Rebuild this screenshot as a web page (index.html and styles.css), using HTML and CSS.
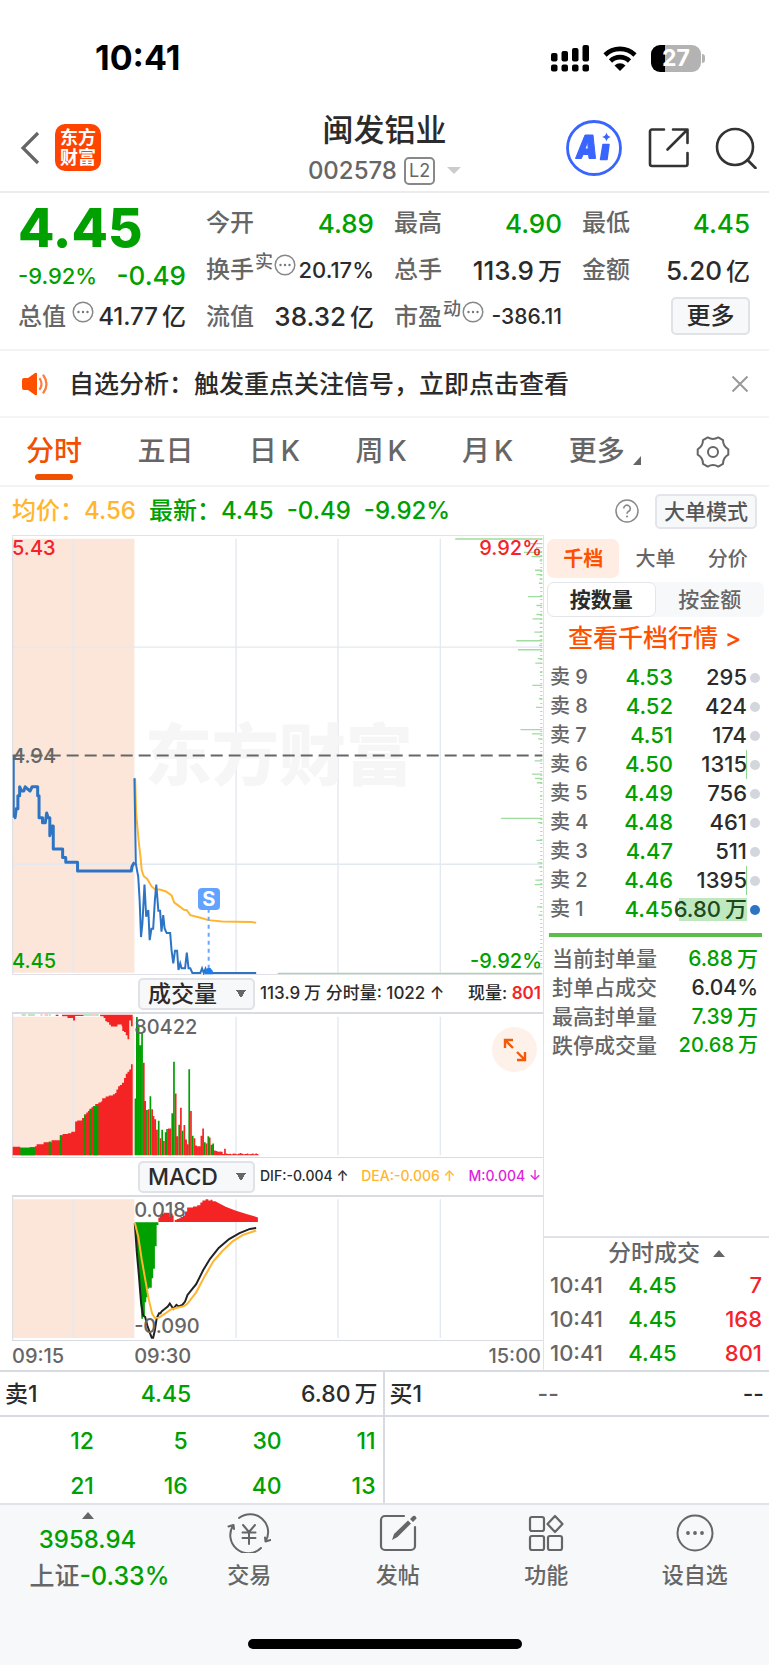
FILE: index.html
```html
<!DOCTYPE html>
<html lang="zh-CN">
<head>
<meta charset="utf-8">
<meta name="viewport" content="width=device-width, initial-scale=1">
<title>闽发铝业 002578</title>
<link rel="stylesheet" href="styles.css">
</head>
<body>
<div class="statusbar">
  <time class="clock">10:41</time>
  <div class="status-icons">
    <svg width="38" height="27" viewBox="0 0 38 27"><g fill="#000"><rect x="0" y="8" width="6.500" height="8.500" rx="2"/><rect x="10.500" y="6" width="6.500" height="10.500" rx="2"/><rect x="21" y="3" width="6.500" height="13.500" rx="2"/><rect x="31.500" y="0" width="6.500" height="16.500" rx="2"/><rect x="0" y="19.500" width="6.500" height="7" rx="2"/><rect x="10.500" y="19.500" width="6.500" height="7" rx="2"/><rect x="21" y="19.500" width="6.500" height="7" rx="2"/><rect x="31.500" y="19.500" width="6.500" height="7" rx="2"/></g></svg>
    <svg width="34" height="26" viewBox="0 0 34 26"><g fill="none" stroke="#000" stroke-width="4.600"><path d="M2 10a21.500 21.500 0 0 1 30 0"/><path d="M7.500 16a13.500 13.500 0 0 1 19 0"/></g><path d="M11.500 20.500a8 8 0 0 1 11 0L17 26z"/></svg>
    <div class="battery"><span>27</span></div>
  </div>
</div>

<header class="header">
  <div class="head-left">
    <button class="icon-btn" aria-label="返回"><svg width="22" height="34" viewBox="0 0 22 34"><path d="M19 2 4 17l15 15" fill="none" stroke="#666" stroke-width="3.200"/></svg></button>
    <div class="logo"><span>东方</span><span>财富</span></div>
  </div>
  <div class="title">
    <h1>闽发铝业</h1>
    <div class="code"><span>002578</span><span class="l2">L2</span><i class="tri-down"></i></div>
  </div>
  <div class="head-right">
    <button class="icon-btn" aria-label="Ai"><svg width="58" height="58" viewBox="0 0 58 58"><circle cx="29" cy="29" r="26.500" fill="none" stroke="#3964fe" stroke-width="2.800"/><path d="M20 16h8l2.500 23.500h-6.500l-.4-4h-5.500l-1.700 4H10.500zM20 30h3.200l-.5-7.500z" fill="#3964fe" fill-rule="evenodd" stroke="#3964fe" stroke-linejoin="round"/><path d="M38 25.500h6l-2 15h-6.500z" fill="#3964fe" stroke="#3964fe" stroke-width="1.500" stroke-linejoin="round"/><path d="M41.500 13.500c.9 3 1.500 3.600 4.500 4.500-3 .9-3.600 1.500-4.500 4.500-.9-3-1.500-3.600-4.500-4.500 3-.9 3.600-1.500 4.500-4.500z" fill="#3964fe"/></svg></button>
    <button class="icon-btn" aria-label="分享"><svg width="42" height="42" viewBox="0 0 42 42"><g fill="none" stroke="#333" stroke-width="2.600" stroke-linecap="round" stroke-linejoin="round"><path d="M16 2.500H4a2 2 0 0 0-2 2V37a2 2 0 0 0 2 2h33.500a2 2 0 0 0 2-2V26"/><path d="M25 2.500h14.500V16M39 3 19.500 22.500"/></g></svg></button>
    <button class="icon-btn" aria-label="搜索"><svg width="42" height="42" viewBox="0 0 42 42"><g fill="none" stroke="#333" stroke-width="2.600" stroke-linecap="round"><circle cx="20" cy="20" r="18"/><path d="m32.500 33 8 8"/></g></svg></button>
  </div>
</header>

<section class="quote">
  <div class="qcol main">
    <strong class="price">4.45</strong>
    <div class="qrow up2"><span class="g s22">-9.92%</span><span class="g">-0.49</span></div>
    <div class="qrow"><span class="lab">总值<svg class="dots gap" viewBox="0 0 22 22"><use href="#dots"/></svg></span><span class="val s24">41.77<small>亿</small></span></div>
  </div>
  <div class="qcol">
    <div class="qrow"><span class="lab">今开</span><span class="val g">4.89</span></div>
    <div class="qrow"><span class="lab">换手<sup>实</sup><svg class="dots" viewBox="0 0 22 22"><use href="#dots"/></svg></span><span class="val s22">20.17%</span></div>
    <div class="qrow"><span class="lab">流值</span><span class="val">38.32<small>亿</small></span></div>
  </div>
  <div class="qcol">
    <div class="qrow"><span class="lab">最高</span><span class="val g">4.90</span></div>
    <div class="qrow"><span class="lab">总手</span><span class="val">113.9<small>万</small></span></div>
    <div class="qrow"><span class="lab">市盈<sup>动</sup><svg class="dots" viewBox="0 0 22 22"><use href="#dots"/></svg></span><span class="val s21">-386.11</span></div>
  </div>
  <div class="qcol">
    <div class="qrow"><span class="lab">最低</span><span class="val g">4.45</span></div>
    <div class="qrow"><span class="lab">金额</span><span class="val">5.20<small>亿</small></span></div>
    <div class="qrow end"><button class="more">更多</button></div>
  </div>
</section>

<section class="notice">
  <svg width="28" height="24" viewBox="0 0 28 24"><path d="M1 8a2 2 0 0 1 2-2h4l7-5q2-1 2 1v20q0 2-2 1l-7-5H3a2 2 0 0 1-2-2z" fill="#ff5000"/><path d="M19 7q3 5 0 10M22.500 3.500q6 8.500 0 17" fill="none" stroke="#ff7a3d" stroke-width="2.200" stroke-linecap="round"/></svg>
  <p>自选分析：触发重点关注信号，立即点击查看</p>
  <button class="icon-btn" aria-label="关闭"><svg width="18" height="18" viewBox="0 0 18 18"><path d="m1.500 1.500 15 15m0-15-15 15" stroke="#999" stroke-width="2"/></svg></button>
</section>

<nav class="tabs">
  <button class="tab on">分时</button>
  <button class="tab">五日</button>
  <button class="tab">日<small>K</small></button>
  <button class="tab">周<small>K</small></button>
  <button class="tab">月<small>K</small></button>
  <button class="tab">更多<svg class="corner" width="8" height="9" viewBox="0 0 8 9"><path d="M8 0v9H0z" fill="#666"/></svg></button>
  <button class="tab" aria-label="设置"><svg width="34" height="34" viewBox="0 0 34 34"><g fill="none" stroke="#666" stroke-width="2" stroke-linejoin="round"><path d="M32.300 14.300V19.700Q27 22.800 27 28.900L22.300 31.600Q17 28.500 11.700 31.600L7 28.900Q7 22.800 1.700 19.700V14.300Q7 11.200 7 5.100L11.700 2.400Q17 5.500 22.300 2.400L27 5.100Q27 11.200 32.300 14.300z"/><circle cx="17" cy="17" r="5"/></g></svg></button>
</nav>

<section class="info">
  <span class="y">均价：4.56</span>
  <span class="g">最新：4.45</span><span class="g">-0.49</span><span class="g">-9.92%</span>
  <div class="info-right">
    <svg width="24" height="24" viewBox="0 0 24 24"><circle cx="12" cy="12" r="11" fill="none" stroke="#888" stroke-width="1.500"/><path d="M8.700 9.500a3.300 3.300 0 1 1 5 2.800q-1.700 1-1.700 2.500" fill="none" stroke="#888" stroke-width="1.600"/><circle cx="12" cy="17.500" r="1.100" fill="#888"/></svg>
    <button class="mode">大单模式</button>
  </div>
</section>

<main class="board">
  <div class="charts">
    <div class="plot price-plot">
      <svg class="canvas" viewBox="34 15 1531 1320" preserveAspectRatio="none">
        <path class="pre" d="M36 23H387V1328H36z"/>
        <path class="grid" d="M210 23V1328M680 23V1328M974 23V1328M1269 23V1328M36 349H1563M36 1002H1563"/>
      </svg>
      <span class="watermark">东方财富</span>
      <svg class="canvas" viewBox="34 15 1531 1320" preserveAspectRatio="none">
        <path class="frame" d="M36 16V1334M36 1334H1563"/>
        <path class="ticks" d="M1312 24H1563M1525 38H1563M1545 50H1563M1510 64H1563M1532 77H1563M1555 90H1563M1542 118H1563M1546 131H1563M1555 144H1563M1553 157H1563M1557 170H1563M1522 197H1563M1546 224H1563M1546 251H1563M1535 264H1563M1555 277H1563M1556 290H1563M1540 304H1563M1555 317H1563M1488 330H1563M1553 344H1563M1493 357H1563M1550 384H1563M1543 397H1563M1556 425H1563M1534 464H1563M1553 504H1563M1545 530H1563M1500 597H1563M1533 610H1563M1551 625H1563M1541 691H1563M1533 731H1563M1542 744H1563M1547 757H1563M1556 797H1563M1444 864H1563M1550 877H1563M1546 930H1563M1549 998H1563M1553 1010H1563M1543 1050H1563M1541 1063H1563M1548 1130H1563M1552 1155H1563M1550 1264H1563M800 1330H1563"/>
        <path class="ticks minor" d="M1560 24V1320"/>
        <path class="mid" d="M36 675H1563"/>
        <path class="avg" d="M389 745 392 850 400 940 405 985 408 1020 414 1038 424 1046 436 1068 446 1077 460 1078 478 1084 494 1096 502 1117 515 1127 530 1139 538 1140 548 1155 575 1162 600 1170 640 1174 680 1175 725 1176 738 1178"/>
        <path class="line" d="M387 743 391 1000 398 1040 402 1110 406 1221 410 1180 416 1063 421 1160 427 1140 431 1230 436 1196 441 1196 446 1110 450 1063 456 1142 461 1142 465 1205 470 1155 474 1195 480 1209 490 1209 494 1260 499 1300 504 1262 510 1262 514 1320 519 1300 523 1315 533 1315 538 1268 543 1315 548 1315 554 1329 577 1329 582 1315 587 1329 592 1316 597 1329H738"/>
        <path class="line" d="M39 675V862"/>
        <path class="line auction" d="M40 862H43L46 835H51V796H56V769L62 782H68L72 769 86 782 92 769H108V796H112V862H122V877H130L134 848 138 862H143V916L150 887H153V956H180V982H189V996H223V1022H378L380 1009 387 996"/>
        <path class="sline" d="M601 1136V1318"/>
        <path d="M590 1333v-10l8-9h8l7 9v10z" fill="#1c7df0"/>
      </svg>
      <span class="mark tl r">5.43</span><span class="mark tr r">9.92%</span>
      <span class="mark ml">4.94</span>
      <span class="mark bl g">4.45</span><span class="mark br g">-9.92%</span>
      <span class="sbadge">S</span>
    </div>
    <div class="ind">
      <select class="pick" aria-label="指标一"><option>成交量</option></select>
      <div class="ind-text"><span>113.9<small>万</small> 分时量: 1022 ↑</span><span>现量: <b class="r">801</b></span></div>
    </div>
    <div class="plot sub">
      <svg class="canvas" viewBox="34 130 1531 435" preserveAspectRatio="none">
        <path class="pre" d="M36 138H387V560H36z"/>
        <path class="grid" d="M210 138V560M680 138V560M974 138V560M1269 138V560"/>
        <path class="frame" d="M36 130V565"/>
        <path class="fr" d="M36 560V534H58V537H85V535H100V532H105V526H125V520H148V514H172V499H180V495H195V493H205V488H216V457H222V454H236V446H242V436H248V430H253V425H258V418H263V414H268V410H274V404H283V399H290V396H294V386H304V381H313V378H325V374H331V370H335V360H340V350H345V346H351V339H357V325H362V312H367V306H372V299H377V283H382V560z"/>
        <path class="fg" d="M58 537H85V535H100V560H58zM140 518H146V560H140zM172 499H177V560H172zM242 436H246V560H242zM257 420H262V560H257zM268 410H283V560H268z"/>
        <path class="fg" d="M62 132H74V134H62zM80 132H100V134H80zM140 132H146V134H140zM240 132H262V134H240zM276 132H284V134H276z"/>
        <path class="fr" d="M116 132H122V134H116zM128 132H138V134H128zM160 132H168V136H160zM178 132H240V136H216V150H210V142H194V137H178zM262 132H276V134H262zM288 132V137H298V142H303V152H308V155H314V163H319V168H338V162H350V167H352V182H357V185H362V195H367V207H372V150H377V167H382V132z"/>
        <path class="bg" d="M390 560V387M394 560V139M399 560V170M404 560V225M409 560V185M423 560V422M433 560V380M457 560V455M467 560V482M477 560V490M481 560V480M496 560V432M501 560V275M516 560V467M526 560V485M545 560V298M555 560V500M590 560V520M600 560V502M609 560V528M614 560V524"/>
        <path class="br2" d="M414 560V278M418 560V395M428 560V420M438 560V420M442 560V440M447 560V450M452 560V482M462 560V508M472 560V516M486 560V478M491 560V478M506 560V372M511 560V502M521 560V415M531 560V468M536 560V512M541 560V526M550 560V425M560 560V508M565 560V530M570 560V532M575 560V532M580 560V500M585 560V478M595 560V524M604 560V506M619 560V545M624 560V547M629 560V549M634 560V548M639 560V549M644 560V556M648 560V540M653 560V554M658 560V556M663 560V555M668 560V557M673 560V554M678 560V555M683 560V557M688 560V555M693 560V553M698 560V555M703 560V557M708 560V556M713 560V554M718 560V557M723 560V556M728 560V554M733 560V557M738 560V554M742 560V556"/>
      </svg>
      <span class="mark at0930 top">80422</span>
      <button class="expand" aria-label="放大"><svg width="24" height="24" viewBox="0 0 24 24"><path d="M2 10V2h8M2 2l8 8M22 14v8h-8M22 22l-8-8" fill="none" stroke="#f25a0a" stroke-width="2.400"/></svg></button>
    </div>
    <div class="ind">
      <select class="pick" aria-label="指标二"><option>MACD</option></select>
      <div class="ind-text fine"><span>DIF:-0.004 ↑</span><span class="y">DEA:-0.006 ↑</span><span class="m">M:0.004 ↓</span></div>
    </div>
    <div class="plot sub">
      <svg class="canvas" viewBox="34 680 1531 435" preserveAspectRatio="none">
        <path class="pre" d="M36 687H387V1109H36z"/>
        <path class="grid" d="M210 687V1109M680 687V1109M974 687V1109M1269 687V1109"/>
        <path class="frame" d="M36 680V1115"/>
        <path class="fr" d="M456 756V742H461V736H466V731H472V728H488V730H497V736H500V756H503V750H509V747H515V745H520V741H527V736H533V724H539V712H556V709H568V705H577V697H583V691H592V687H600V691H607V688H612V693H620L650 710 680 722 710 732 743 742V756z"/>
        <path class="fg" d="M388 757H456V765H451V830H446V898H441V927H437V956H428V960H425V985H421V1000H417V1040H412V1050H407L400 920z"/>
        <path class="dif" d="M388 760 394 850 400 920 406 1000 412 1040 418 1045 424 1070 432 1095 437 1108 441 1108 446 1085 451 1050 458 1034 462 1034 466 1027 475 1020 483 1013 489 1004 499 1020 508 1008 515 1013 525 1008 533 998 540 978 565 945 585 903 605 868 630 835 660 808 690 790 720 777 738 774"/>
        <path class="avg" d="M388 758 398 800 408 870 418 930 428 990 438 1035 446 1048 458 1047 475 1035 492 1022 510 1017 530 1012 540 1004 565 970 590 920 615 875 640 845 670 815 700 795 738 782"/>
      </svg>
      <span class="mark at0930 top">0.018</span><span class="mark at0930 bottom">-0.090</span>
    </div>
    <div class="axis"><span>09:15</span><span class="a2">09:30</span><span>15:00</span></div>
  </div>

  <aside class="side">
    <div class="side-tabs"><button class="on">千档</button><button>大单</button><button>分价</button></div>
    <div class="seg"><button class="on">按数量</button><button>按金额</button></div>
    <a class="deep" href="#">查看千档行情 &gt;</a>
    <table class="asks">
      <tr><th>卖 9</th><td class="g">4.53</td><td>295</td><td><i></i></td></tr>
      <tr><th>卖 8</th><td class="g">4.52</td><td>424</td><td><i></i></td></tr>
      <tr><th>卖 7</th><td class="g">4.51</td><td>174</td><td><i></i></td></tr>
      <tr class="bar"><th>卖 6</th><td class="g">4.50</td><td>1315</td><td><i></i></td></tr>
      <tr><th>卖 5</th><td class="g">4.49</td><td>756</td><td><i></i></td></tr>
      <tr><th>卖 4</th><td class="g">4.48</td><td>461</td><td><i></i></td></tr>
      <tr><th>卖 3</th><td class="g">4.47</td><td>511</td><td><i></i></td></tr>
      <tr class="bar"><th>卖 2</th><td class="g">4.46</td><td>1395</td><td><i></i></td></tr>
      <tr class="best"><th>卖 1</th><td class="g">4.45</td><td><span>6.80<small>万</small></span></td><td><i></i></td></tr>
    </table>
    <dl class="seal">
      <div><dt>当前封单量</dt><dd class="g">6.88<small>万</small></dd></div>
      <div><dt>封单占成交</dt><dd>6.04%</dd></div>
      <div><dt>最高封单量</dt><dd class="g">7.39<small>万</small></dd></div>
      <div><dt>跌停成交量</dt><dd class="g s20">20.68<small>万</small></dd></div>
    </dl>
    <div class="deals">
      <h2>分时成交<i class="tri-up"></i></h2>
      <table>
        <tr><th>10:41</th><td class="g">4.45</td><td class="r">7</td></tr>
        <tr><th>10:41</th><td class="g">4.45</td><td class="r">168</td></tr>
        <tr><th>10:41</th><td class="g">4.45</td><td class="r">801</td></tr>
      </table>
    </div>
  </aside>
</main>

<section class="level">
  <div class="half">
    <div class="best-row"><span>卖1</span><span class="g">4.45</span><span>6.80<small>万</small></span></div>
    <div class="queue g"><span>12</span><span>5</span><span>30</span><span>11</span><span>21</span><span>16</span><span>40</span><span>13</span></div>
  </div>
  <div class="half">
    <div class="best-row"><span>买1</span><span class="mute">--</span><span>--</span></div>
  </div>
</section>

<footer class="footer">
  <nav class="foot-nav">
    <button class="index"><i class="tri-up"></i><span class="g">3958.94</span><span class="chg">上证<span class="g">-0.33%</span></span></button>
    <button><svg width="44" height="40" viewBox="0 0 44 40"><g fill="none" stroke="#666" stroke-width="2" stroke-linecap="round" stroke-linejoin="round"><path d="M12 5A18 18 0 0 1 38.500 28.500l5-1.500M38.500 28.500l-.5-4"/><path d="M34 35A18 18 0 0 1 6.500 12l-5 1.500M6.500 12l.5 4"/><path d="m16 12 6 7 6-7M15.500 19.500h13M15.500 25h13M22 19v12"/></g></svg>交易</button>
    <button><svg width="40" height="40" viewBox="0 0 40 40"><path d="M26 3H7a4 4 0 0 0-4 4v26a4 4 0 0 0 4 4h26a4 4 0 0 0 4-4V14" fill="none" stroke="#666" stroke-width="2.200" stroke-linecap="round"/><path d="m14 27 2-6L30 7.500l3 3L19.500 24zM32 6l3-3q2-1 3 1t0 2l-3 3z" fill="#666"/></svg>发帖</button>
    <button><svg width="40" height="40" viewBox="0 0 40 40"><g fill="none" stroke="#666" stroke-width="2.200" stroke-linejoin="round"><rect x="4" y="4" width="14" height="14" rx="2"/><rect x="4" y="23" width="14" height="14" rx="2"/><rect x="22" y="23" width="14" height="14" rx="2"/><path d="m29 3 7.500 8-7.500 8-7.500-8z"/></g></svg>功能</button>
    <button><svg width="40" height="40" viewBox="0 0 40 40"><circle cx="20" cy="20" r="17.500" fill="none" stroke="#666" stroke-width="2"/><g fill="#666"><circle cx="13" cy="20" r="1.900"/><circle cx="20" cy="20" r="1.900"/><circle cx="27" cy="20" r="1.900"/></g></svg>设自选</button>
  </nav>
  <div class="home"></div>
</footer>

<svg class="defs" aria-hidden="true"><symbol id="dots" viewBox="0 0 22 22"><circle cx="11" cy="11" r="9.800" fill="none" stroke="#888" stroke-width="1.500"/><g fill="#777"><circle cx="6.500" cy="11" r="1.200"/><circle cx="11" cy="11" r="1.200"/><circle cx="15.500" cy="11" r="1.200"/></g></symbol></svg>
</body>
</html>
```
FILE: styles.css
```css
* { box-sizing: border-box; }
body {
  margin: 0;
  background: #fff;
  color: #2b2b2b;
  font: 500 24px/1.2 Inter, "Noto Sans CJK SC", sans-serif;
}
button, select {
  font: inherit;
  color: inherit;
  background: none;
  border: 0;
  padding: 0;
  margin: 0;
}
svg { display: block; flex: none; }
h1, h2, p, dl, dd { margin: 0; font-weight: 500; }
small { font-size: inherit; margin-left: 4px; }
th { font-weight: 500; text-align: left; }
table { border-collapse: collapse; width: 100%; table-layout: fixed; }
th, td { padding: 0; }
.defs { position: absolute; width: 0; height: 0; }
.g { color: #00a000; }
.r { color: #f5222a; }
.y { color: #ffb62e; }
.m { color: #e01ee0; }
.mute { color: #666; }

/* status bar */
.statusbar {
  display: flex;
  justify-content: space-between;
  align-items: center;
  height: 104px;
  padding: 12px 68px 0 95px;
}
.clock { font-size: 34px; font-weight: 700; color: #000; }
.status-icons { display: flex; align-items: center; gap: 14px; }
.battery {
  position: relative;
  width: 50px;
  height: 27px;
  border-radius: 9px;
  background: linear-gradient(90deg, #000 28%, #b3b3b3 28%);
  color: #fff;
  font-size: 23px;
  font-weight: 700;
  line-height: 27px;
  text-align: center;
}
.battery::after {
  content: "";
  position: absolute;
  right: -4px;
  top: 9px;
  width: 3px;
  height: 9px;
  border-radius: 0 3px 3px 0;
  background: #b3b3b3;
}

/* header */
.header {
  display: grid;
  grid-template-columns: 1fr auto 1fr;
  align-items: center;
  height: 89px;
  padding: 0 12px 0 19px;
  border-bottom: 2px solid #ececec;
}
.icon-btn { display: flex; }
.head-left { display: flex; align-items: center; gap: 14px; }
.logo {
  display: flex;
  flex-direction: column;
  align-items: center;
  justify-content: center;
  width: 46px;
  height: 47px;
  border-radius: 10px;
  background: #ff4400;
  color: #fff;
  font-size: 18px;
  font-weight: 700;
  line-height: 20px;
}
.title { display: flex; flex-direction: column; align-items: center; gap: 6px; padding-right: 7px; }
.title h1 { font-size: 31px; line-height: 40px; }
.code { display: flex; align-items: center; gap: 7px; line-height: 30px; color: #666; }
.l2 {
  padding: 0 3px;
  border: 2px solid #888;
  border-radius: 5px;
  font-size: 18px;
  font-weight: 400;
  line-height: 24px;
}
.tri-down, .tri-up {
  display: inline-block;
  border: 6px solid transparent;
}
.tri-down { border-width: 7px 7px 0; border-top-color: #ccc; margin-left: 5px; }
.tri-up { border-width: 0 6px 7px; border-bottom-color: #666; }
.head-right { display: flex; align-items: center; justify-content: flex-end; gap: 25px; }

/* quote */
.quote {
  display: grid;
  grid-template-columns: repeat(4, 1fr);
  column-gap: 20px;
  padding: 7px 19px 9px 18px;
  border-bottom: 2px solid #f3f3f3;
}
.qcol { display: flex; flex-direction: column; }
.qrow {
  display: flex;
  justify-content: space-between;
  align-items: center;
  height: 47px;
  white-space: nowrap;
  font-size: 26px;
}
.qrow:last-child { height: 46px; }
.main .price { font-size: 53px; font-weight: 800; line-height: 56px; color: #00a000; }
.main .up2 { height: 38px; padding-top: 2px; }
.lab { display: flex; align-items: center; font-size: 24px; color: #666; }
.lab sup { align-self: flex-start; font-size: 18px; line-height: 18px; margin: -3px 1px 0; }
.dots { width: 22px; height: 22px; margin-top: -10px; }
.dots.gap { margin-left: 6px; }
.qrow small { font-size: 24px; }
.qrow .s21 { font-size: 21px; }
.qrow .s22 { font-size: 22px; }
.qrow .s24 { font-size: 24px; }
.qrow.end { justify-content: flex-end; }
.more {
  width: 79px;
  height: 38px;
  margin-bottom: 3px;
  border: 2px solid #e0e2e8;
  border-radius: 5px;
  background: #f7f8fa;
  font-size: 24px;
  line-height: 34px;
}

/* notice */
.notice {
  display: flex;
  align-items: center;
  height: 67px;
  padding: 0 20px 0 21px;
  gap: 20px;
  border-bottom: 2px solid #f5f5f5;
}
.notice p { flex: 1; font-size: 25px; }

/* period tabs */
.tabs {
  display: flex;
  justify-content: space-between;
  height: 69px;
  padding: 0 39px 0 26px;
  border-bottom: 2px solid #f3f3f3;
  font-size: 28px;
  color: #666;
}
.tab { position: relative; display: flex; align-items: center; }
.tab.on { color: #f05000; }
.tab.on::after {
  content: "";
  position: absolute;
  left: 9px;
  right: 9px;
  bottom: 5px;
  height: 6px;
  border-radius: 3px;
  background: #f05000;
}
.corner { margin: 18px 0 0 8px; }

/* price summary */
.info {
  display: flex;
  align-items: center;
  height: 48px;
  padding: 0 12px;
  gap: 13px;
  font-size: 24px;
  white-space: nowrap;
}
.info-right { display: flex; align-items: center; gap: 16px; margin-left: auto; }
.mode {
  width: 102px;
  height: 35px;
  border: 2px solid #e3e5ea;
  border-radius: 5px;
  background: #f7f8fa;
  font-size: 21px;
  line-height: 31px;
  color: #555;
}

/* charts and order book */
.board { display: grid; grid-template-columns: 1fr 226px; border-bottom: 2px solid #d8dbe2; }
.charts { margin-left: 12px; }
.plot { position: relative; border-top: 1px solid #dfe2e8; }
.price-plot { height: 440px; }
.sub { height: 146px; border-top: 2px solid #d8dbe2; border-bottom: 1px solid #d8dbe2; }
.canvas { position: absolute; inset: 0; width: 100%; height: 100%; }
.canvas path { vector-effect: non-scaling-stroke; }
.pre { fill: #fce6da; }
.grid, .frame, .ticks, .mid, .avg, .line, .sline, .dif, .bg, .br2 { fill: none; }
.grid { stroke: #e4e8f0; stroke-width: 1.400; }
.frame { stroke: #d8dbe2; }
.ticks { stroke: #9fdc9f; stroke-width: 1.300; }
.minor { stroke-width: 2; stroke-dasharray: 1 3; }
.mid { stroke: #666; stroke-width: 2; stroke-dasharray: 12 6; }
.avg { stroke: #ffb62e; stroke-width: 2; }
.line { stroke: #2e74c4; stroke-width: 2; }
.auction { stroke-width: 3; stroke-linejoin: round; }
.sline { stroke: #6aa6ff; stroke-width: 2; stroke-dasharray: 4 4; }
.dif { stroke: #222; stroke-width: 2; }
.fr { fill: #f42424; }
.fg { fill: #00a000; }
.bg { stroke: #00a000; stroke-width: 1.700; }
.br2 { stroke: #f42424; stroke-width: 1.700; }
.watermark {
  position: absolute;
  left: 25%;
  top: 180px;
  font-size: 67px;
  font-weight: 900;
  line-height: 80px;
  color: #f6f6f6;
  white-space: nowrap;
}
.mark { position: absolute; font-size: 20px; line-height: 24px; color: #666; }
.mark.g { color: #00a000; }
.mark.r { color: #f5222a; }
.tl { left: 0; top: 0; }
.tr { right: 1px; top: 0; }
.ml { left: 0; top: 50%; transform: translateY(-50%); }
.bl { left: 0; bottom: 2px; }
.br { right: 1px; bottom: 2px; }
.at0930 { left: 23%; }
.top { top: 1px; }
.bottom { bottom: 2px; }
.sbadge {
  position: absolute;
  left: 35%;
  top: 352px;
  width: 22px;
  height: 22px;
  border-radius: 4px;
  background: #62a3ff;
  color: #fff;
  font-size: 20px;
  font-weight: 700;
  line-height: 22px;
  text-align: center;
}
.ind {
  display: flex;
  align-items: center;
  justify-content: space-between;
  height: 37px;
  padding: 0 2px 0 126px;
  gap: 5px;
}
.pick {
  appearance: none;
  flex: none;
  width: 117px;
  height: 32px;
  padding: 0 8px;
  border: 2px solid #e0e2e8;
  border-radius: 5px;
  background-color: #f7f8fa;
  background-image:
    linear-gradient(to bottom left, #666 50%, transparent 50%),
    linear-gradient(to bottom right, #666 50%, transparent 50%);
  background-repeat: no-repeat;
  background-size: 5px 8px;
  background-position: 96px 10px, 101px 10px;
  font-size: 23px;
  line-height: 28px;
}
.ind-text { display: flex; flex: 1; justify-content: space-between; font-size: 17px; white-space: nowrap; }
.ind-text b { font-weight: 600; }
.ind-text.fine { font-size: 14px; }
.expand {
  position: absolute;
  right: 6px;
  top: 13px;
  display: flex;
  align-items: center;
  justify-content: center;
  width: 45px;
  height: 45px;
  border-radius: 50%;
  background: #fef1ea;
}
.axis { position: relative; display: flex; justify-content: space-between; height: 29px; padding-right: 2px; font-size: 20px; line-height: 30px; color: #666; }
.a2 { position: absolute; left: 23%; }

.side {
  display: flex;
  flex-direction: column;
  border-left: 1px solid #dfe2e8;
}
.side-tabs { display: grid; grid-template-columns: repeat(3, 1fr); height: 39px; margin: 4px 5px 0 3px; font-size: 20px; color: #666; }
.side-tabs .on { border-radius: 7px; background: #ffede3; color: #ff5000; font-weight: 700; }
.seg { display: grid; grid-template-columns: 1fr 1fr; height: 35px; margin: 4px 5px 0 3px; border-radius: 7px; background: #f7f8fa; font-size: 21px; color: #666; }
.seg .on { border: 1px solid #e3e5ea; border-radius: 7px; background: #fff; color: #2b2b2b; font-weight: 700; }
.deep { padding-left: 24px; font-size: 25px; line-height: 43px; color: #ff5000; text-decoration: none; white-space: nowrap; }
.asks { margin-top: 3px; font-size: 22px; line-height: 29px; }
.asks tr { height: 29px; }
.asks th { width: 57px; padding-left: 6px; font-size: 20px; color: #666; white-space: nowrap; }
.asks td { text-align: right; }
.asks td:nth-child(2) { width: 72px; }
.asks td:nth-child(3) { white-space: nowrap; direction: rtl; }
.asks td:nth-child(4) { width: 22px; }
.asks i { display: block; width: 10px; height: 10px; margin-left: 3px; border-radius: 50%; background: #d3d6dd; }
.bar td:nth-child(3) { box-shadow: inset -1px 0 #8fd88f; }
.asks td:nth-child(3) { text-align: left; }
.best span { direction: ltr; unicode-bidi: isolate; background: linear-gradient(#bfe8bf, #bfe8bf) no-repeat 100% 50% / 68px 23px; color: #1d4a1d; }
.asks .best i { background: #2e74c4; }
.asks td:nth-child(3) { text-align: right; }
.seal { margin: 9px 7px 0 5px; padding-top: 7px; border-top: 4px solid #5cbd4d; }
.seal div { display: flex; justify-content: space-between; height: 29px; padding: 0 4px 0 3px; font-size: 21px; line-height: 29px; white-space: nowrap; color: #666; }
.seal dd { color: #2b2b2b; }
.seal dd.g { color: #00a000; }
.seal dd.s20 { font-size: 20px; }
.deals { margin-top: auto; border-top: 2px solid #dfe2e8; }
.deals h2 { display: flex; align-items: center; justify-content: center; gap: 13px; padding-left: 20px; font-size: 23px; line-height: 30px; color: #666; }
.deals table { font-size: 22px; line-height: 34px; }
.deals th { padding-left: 6px; color: #666; }
.deals td { text-align: center; padding-right: 8px; }
.deals td:nth-child(3) { text-align: right; padding-right: 7px; }

/* best bid / ask */
.level { display: grid; grid-template-columns: 199fr 201fr; height: 131px; }
.half + .half { border-left: 2px solid #d8dbe2; }
.best-row {
  display: grid;
  grid-template-columns: 1fr 1fr 2fr;
  height: 45px;
  padding: 0 5px;
  border-bottom: 2px solid #d8dbe2;
  font-size: 23px;
  line-height: 44px;
  text-align: right;
  white-space: nowrap;
}
.best-row > :first-child { text-align: left; }
.half + .half > .best-row > :nth-child(2) { padding-right: 18px; }
.queue { display: grid; grid-template-columns: repeat(4, 1fr); padding: 2px 7px 0 0; line-height: 45px; text-align: right; font-size: 23px; height: 86px; overflow: hidden; }

/* footer */
.footer { border-top: 2px solid #e0e2e8; background: #f7f8fa; padding: 7px 0 16px; height: 162px; display: flex; flex-direction: column; justify-content: space-between; align-items: center; }
.foot-nav { display: grid; grid-template-columns: 175px repeat(4, 1fr); width: 100%; }
.foot-nav button { display: flex; flex-direction: column; align-items: center; gap: 6px; font-size: 22px; line-height: 32px; color: #666; padding-top: 1px; white-space: nowrap; }
.foot-nav .index { gap: 4px; font-size: 24px; line-height: 34px; padding: 0; }
.index .chg { padding-left: 24px; font-size: 25px; line-height: 30px; }
.home { width: 274px; height: 10px; border-radius: 5px; background: #000; }
```
